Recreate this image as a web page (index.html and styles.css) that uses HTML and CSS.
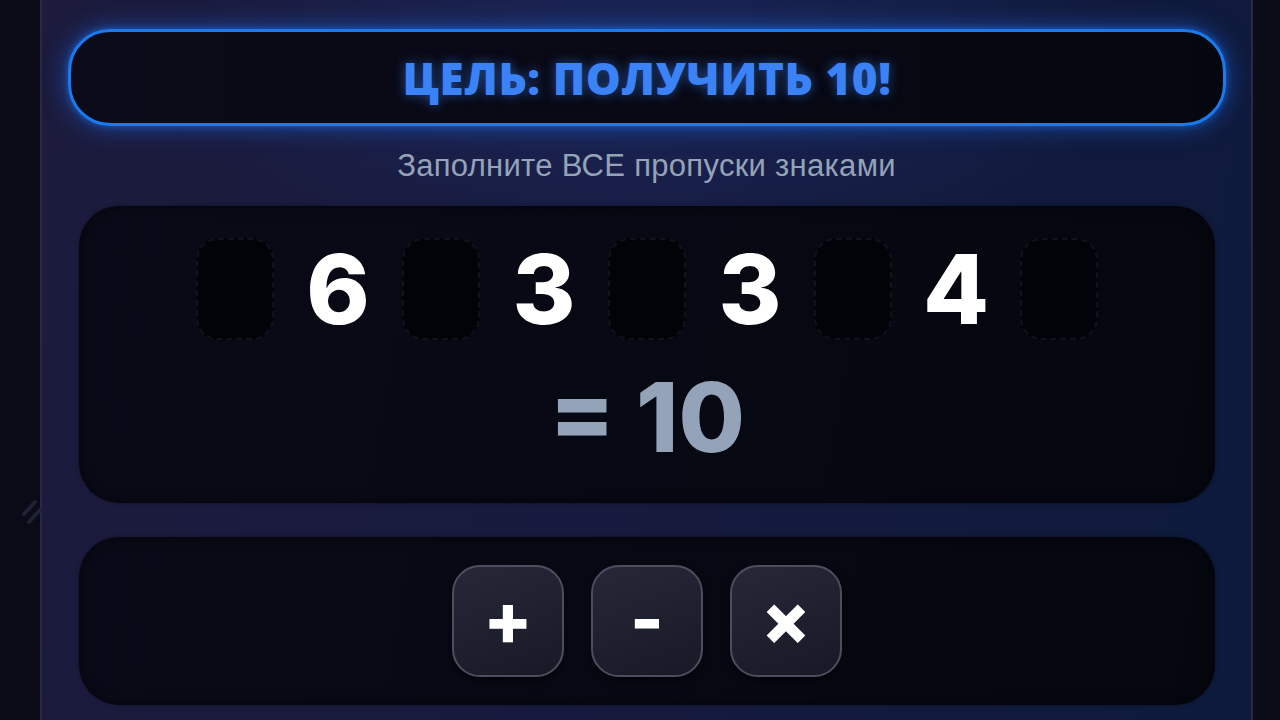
FILE: index.html
```html
<!DOCTYPE html>
<html lang="ru">
<head>
<meta charset="utf-8">
<title>Цель: получить 10</title>
<link rel="stylesheet" href="styles.css">
</head>
<body>
<svg class="deco" width="24" height="34" viewBox="0 0 24 34"><path d="M6 14 L17 2 M11 22 L22 10" stroke="#1f2134" stroke-width="4" stroke-linecap="round"/></svg>
<main class="panel">
  <div class="goal"><h1 class="goal-text">ЦЕЛЬ: ПОЛУЧИТЬ 10!</h1></div>
  <p class="hint">Заполните ВСЕ пропуски знаками</p>
  <section class="card equation">
    <div class="row">
      <div class="slot"></div>
      <div class="num">6</div>
      <div class="slot"></div>
      <div class="num">3</div>
      <div class="slot"></div>
      <div class="num">3</div>
      <div class="slot"></div>
      <div class="num">4</div>
      <div class="slot"></div>
    </div>
    <div class="result">= 10</div>
  </section>
  <section class="card ops">
    <button class="op">+</button>
    <button class="op">-</button>
    <button class="op">×</button>
  </section>
</main>
</body>
</html>
```
FILE: styles.css
```css
html, body {
  margin: 0;
  height: 100%;
}
body {
  background: linear-gradient(90deg, #0b0b18 0%, #0a0c18 100%);
  overflow: hidden;
  font-family: "Liberation Sans", Arial, sans-serif;
  position: relative;
}
.deco {
  position: absolute;
  left: 18px;
  top: 500px;
}
.panel {
  margin-left: 40px;
  width: 1209px;
  height: 720px;
  border-left: 2px solid #262a42;
  border-right: 2px solid #262a42;
  background:
    radial-gradient(ellipse 700px 300px at 50% 60px, rgba(40,80,180,0.22), rgba(40,80,180,0) 70%),
    linear-gradient(100deg, #1c1b3d 0%, #171a3e 45%, #0d1a3c 100%);
  padding-top: 29px;
  box-sizing: content-box;
}
.goal {
  margin-left: 26px;
  width: 1152px;
  height: 91px;
  border: 3px solid #1a7bf0;
  border-radius: 42px;
  background: linear-gradient(90deg, #0b0b19 0%, #05070f 100%);
  box-shadow: 0 0 24px rgba(30,110,240,0.6), 0 0 6px rgba(30,120,250,0.6);
  display: flex;
  align-items: center;
  justify-content: center;
}
.goal-text {
  margin: 0;
  font-family: "Open Sans", sans-serif;
  font-weight: 800;
  font-size: 44px;
  letter-spacing: 0.6px;
  color: #3b82f6;
  text-shadow: 0 0 12px rgba(59,130,246,0.55);
}
.hint {
  margin: 0;
  height: 80px;
  line-height: 80px;
  text-align: center;
  font-size: 31px;
  letter-spacing: 0.3px;
  color: #94a3b8;
}
.card {
  margin-left: 37px;
  width: 1136px;
  border-radius: 40px;
  background: linear-gradient(100deg, #090a17 0%, #05070f 100%);
  box-shadow: inset 0 0 12px rgba(0,0,0,0.6), 0 0 4px rgba(0,0,0,0.3);
  box-sizing: border-box;
}
.equation {
  height: 297px;
  padding-top: 29px;
}
.row {
  display: flex;
  justify-content: center;
  align-items: center;
  gap: 24px;
}
.slot {
  width: 78px;
  height: 102px;
  box-sizing: border-box;
  border: 2px dashed #10121c;
  border-radius: 22px;
  background: #020308;
}
.num {
  width: 80px;
  text-align: center;
  font-family: Inter, sans-serif;
  font-weight: 800;
  font-size: 96px;
  line-height: 108px;
  color: #ffffff;
}
.result {
  margin-top: 19px;
  text-align: center;
  font-family: Inter, sans-serif;
  font-weight: 800;
  font-size: 96px;
  line-height: 110px;
  color: #94a3b8;
}
.ops {
  margin-top: 34px;
  height: 168px;
  display: flex;
  justify-content: center;
  align-items: center;
  gap: 27px;
}
.op {
  width: 112px;
  height: 112px;
  border-radius: 28px;
  border: 2px solid #4b4e5e;
  background: linear-gradient(160deg, #262838 0%, #171926 100%);
  color: #ffffff;
  font-family: Inter, sans-serif;
  font-weight: 800;
  font-size: 72px;
  line-height: 1;
  padding: 0 0 4px;
  box-shadow: 0 4px 10px rgba(0,0,0,0.5);
}
```
